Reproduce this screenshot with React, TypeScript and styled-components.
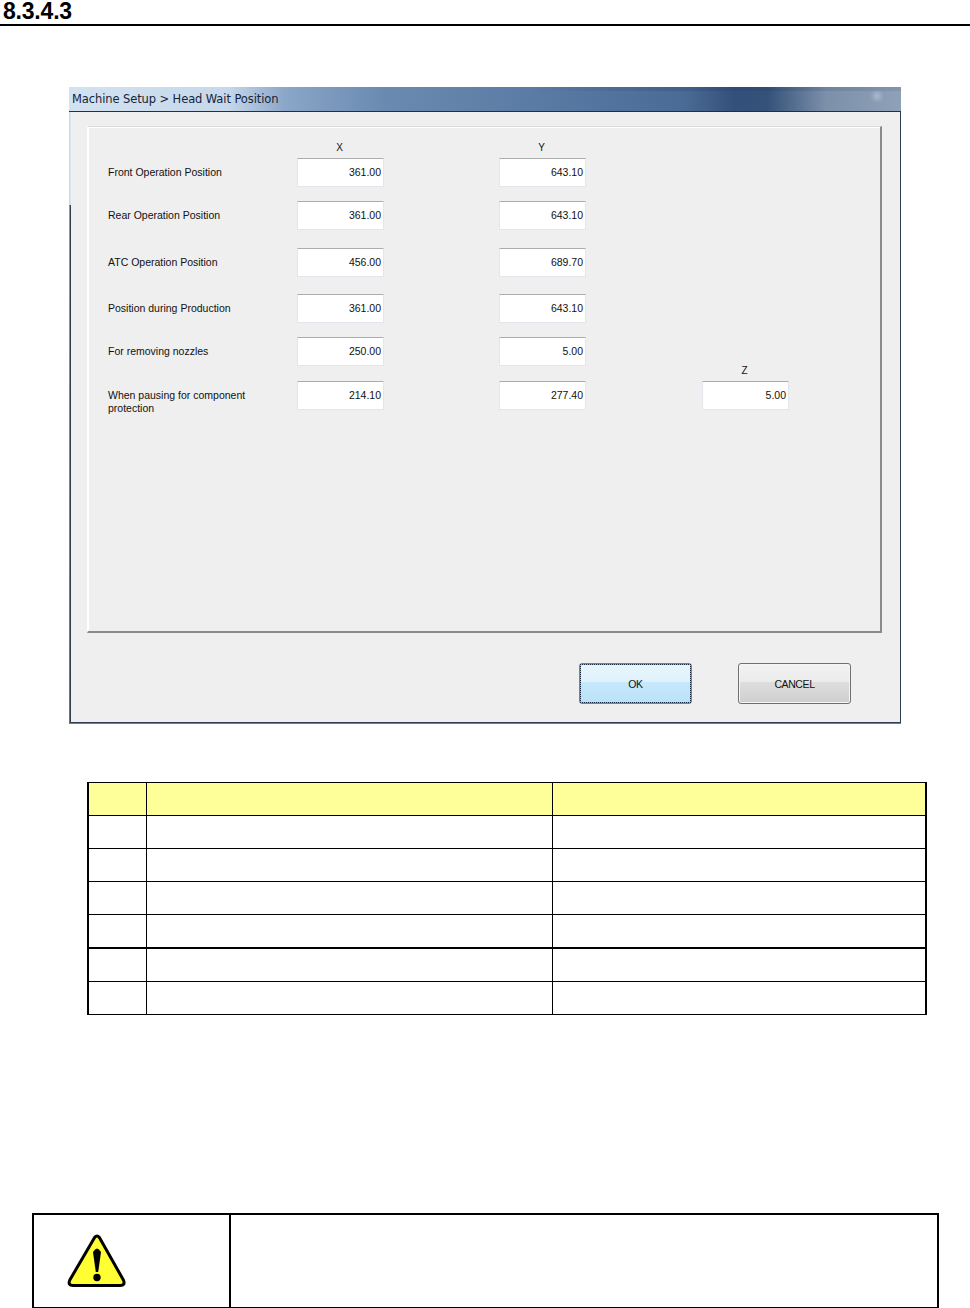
import { Fragment } from 'react';
import styled, { createGlobalStyle } from 'styled-components';

const GlobalStyle = createGlobalStyle`
  html, body {
    margin: 0;
    padding: 0;
    background: #fff;
    overflow: hidden;
  }
  * {
    box-sizing: border-box;
  }
`;

const Page = styled.div`
  width: 970px;
  height: 1308px;
  display: flex;
  flex-direction: column;
  font-family: 'Liberation Sans', Arial, sans-serif;
`;

const Heading = styled.h1`
  margin: 0;
  height: 26px;
  padding-left: 3px;
  border-bottom: 2px solid #000;
  font-size: 23px;
  line-height: 22px;
  letter-spacing: -0.2px;
  font-weight: 700;
  color: #000;
`;

const Dialog = styled.div`
  width: 832px;
  height: 636px;
  margin: 61px 0 0 69px;
  padding-left: 1px;
  display: flex;
  flex-direction: column;
  background:
    linear-gradient(180deg, #c9d9ea 0 118px, #8c9bb0 118px, #62768f 100%) left top / 1px 100% no-repeat,
    #efefef;
  box-shadow: 0 1px 0 #6a7f99;
`;

const TitleBar = styled.div`
  height: 25px;
  margin-left: -1px;
  padding: 2px 0 0 3px;
  background:
    radial-gradient(circle at 808px 9px, rgba(255, 255, 255, 0.3), transparent 7px),
    linear-gradient(90deg, rgba(30, 50, 90, 0), rgba(30, 50, 90, 0.2) 40%, rgba(30, 50, 90, 0.1) 100%) right top / 45% 4px no-repeat,
    linear-gradient(
      90deg,
      #d3e2f1 0%,
      #c6d8eb 19%,
      #8aa6c8 26%,
      #6a8ab0 38%,
      #5576a0 62%,
      #4a6b95 74%,
      #33507a 80%,
      #35527a 84%,
      #7c90aa 91%,
      #8ea1b7 100%
    );
  border-bottom: 1px solid #24303f;
  color: #14243a;
  font-family: 'DejaVu Sans', sans-serif;
  font-size: 11.5px;
  letter-spacing: -0.1px;
  line-height: 20px;
  white-space: nowrap;
`;

const Body = styled.div`
  flex: 1;
  padding: 14px 18px 0 17px;
  display: flex;
  flex-direction: column;
  background:
    linear-gradient(#d9e6f2, #d9e6f2) left top / 1px 93px no-repeat,
    linear-gradient(#2f3f52, #2f3f52) left 93px / 1px 100% no-repeat;
  border-right: 1px solid #2f3f52;
  border-bottom: 1px solid #2f3f52;
`;

const Panel = styled.div`
  height: 507px;
  padding: 14px 0 0 20px;
  background: #efefef;
  border-top: 1px solid #dcdcdc;
  border-left: 1px solid #fff;
  border-right: 2px solid #8a8a8a;
  border-bottom: 2px solid #8a8a8a;
  box-shadow: inset 1px 1px 0 #fff;
`;

const FormGrid = styled.div`
  display: grid;
  grid-template-columns: 189px 202px 203px 87px;
  grid-template-rows: 17px 43px 47px 46px 43px 44px auto;
  color: #111;
  font-size: 10.5px;
  line-height: 13px;
`;

const AxisLabel = styled.div<{ $inputRow?: boolean }>`
  width: 85px;
  text-align: center;
  line-height: 14px;
  font-size: 10px;
  align-self: ${(props) => (props.$inputRow ? 'end' : 'start')};
  padding-bottom: ${(props) => (props.$inputRow ? '3px' : '0')};
`;

const FieldLabel = styled.div`
  padding-top: 8px;
  width: 150px;
`;

const ValueBox = styled.div`
  width: 87px;
  height: 29px;
  padding-right: 2px;
  display: flex;
  align-items: center;
  justify-content: flex-end;
  background: #fff;
  border: 1px solid #e2e6ec;
  border-top-color: #acacac;
  border-radius: 1px;
  font-size: 10.5px;
`;

const ButtonRow = styled.div`
  display: flex;
  gap: 46px;
  padding: 30px 0 0 492px;
`;

const DialogButton = styled.div<{ $primary?: boolean }>`
  position: relative;
  width: 113px;
  height: 41px;
  display: flex;
  align-items: center;
  justify-content: center;
  font-size: 10.5px;
  letter-spacing: -0.4px;
  color: #111;
  border-radius: 3px;
  border: 1px solid ${(props) => (props.$primary ? '#1aa3dc' : '#707070')};
  background: ${(props) =>
    props.$primary
      ? 'linear-gradient(180deg, #e9f6fd 0%, #dff2fc 46%, #c6e8fb 47%, #bbe2f9 100%)'
      : 'linear-gradient(180deg, #f2f2f2 0%, #ebebeb 46%, #dddddd 47%, #cfcfcf 100%)'};
  box-shadow: inset 0 0 0 1px ${(props) => (props.$primary ? '#5cc3ee' : '#f5f5f5')};

  &::after {
    content: '';
    display: ${(props) => (props.$primary ? 'block' : 'none')};
    position: absolute;
    inset: 0;
    border: 1px dotted #1b2a44;
  }
`;

const LegendTable = styled.table`
  width: 840px;
  margin: 59px 0 0 87px;
  border-collapse: collapse;
  table-layout: fixed;
  border-left: 2px solid #000;
  border-right: 2px solid #000;
`;

const Cell = styled.td<{ $head?: boolean; $thick?: boolean }>`
  height: ${(props) => (props.$thick ? '34px' : '33px')};
  padding: 0;
  border: 1px solid #000;
  border-top-width: ${(props) => (props.$thick ? '2px' : '1px')};
  background: ${(props) => (props.$head ? '#ffff99' : '#fff')};
`;

const WarningBox = styled.div`
  width: 907px;
  height: 95px;
  margin: 198px 0 0 32px;
  display: grid;
  grid-template-columns: 197px 1fr;
  border: 2px solid #000;
  border-bottom-width: 1px;
`;

const IconCell = styled.div`
  border-right: 2px solid #000;
  padding: 18px 0 0 32px;
`;

const WarningIcon = () => (
  <svg width='62' height='56' viewBox='0 0 62 56' style={{ display: 'block' }}>
    <path
      d='M28.6 4.5 Q31 1.5 33.4 4.5 L57.4 47 Q59.7 52.5 54.2 52.5 L7 52.5 Q1.5 52.5 3.8 47 Z'
      fill='#ffff33'
      stroke='#000'
      strokeWidth='3'
      strokeLinejoin='round'
    />
    <path d='M27 19 Q31 12 35 19 L32.2 39 L29.8 39 Z' fill='#000' />
    <circle cx='31' cy='44.5' r='3.7' fill='#000' />
  </svg>
);

const rows = [
  { label: 'Front Operation Position', x: '361.00', y: '643.10' },
  { label: 'Rear Operation Position', x: '361.00', y: '643.10' },
  { label: 'ATC Operation Position', x: '456.00', y: '689.70' },
  { label: 'Position during Production', x: '361.00', y: '643.10' },
  { label: 'For removing nozzles', x: '250.00', y: '5.00' },
];

const App = () => {
  return (
    <Page>
      <GlobalStyle />
      <Heading>8.3.4.3</Heading>
      <Dialog>
        <TitleBar>Machine Setup &gt; Head Wait Position</TitleBar>
        <Body>
          <Panel>
            <FormGrid>
              <div />
              <AxisLabel>X</AxisLabel>
              <AxisLabel>Y</AxisLabel>
              <div />
              {rows.map((row, index) => (
                <Fragment key={row.label}>
                  <FieldLabel>{row.label}</FieldLabel>
                  <ValueBox>{row.x}</ValueBox>
                  <ValueBox>{row.y}</ValueBox>
                  {index === 4 ? <AxisLabel $inputRow>Z</AxisLabel> : <div />}
                </Fragment>
              ))}
              <FieldLabel>When pausing for component protection</FieldLabel>
              <ValueBox>214.10</ValueBox>
              <ValueBox>277.40</ValueBox>
              <ValueBox>5.00</ValueBox>
            </FormGrid>
          </Panel>
          <ButtonRow>
            <DialogButton $primary>OK</DialogButton>
            <DialogButton>CANCEL</DialogButton>
          </ButtonRow>
        </Body>
      </Dialog>
      <LegendTable>
        <colgroup>
          <col style={{ width: 58 }} />
          <col style={{ width: 406 }} />
          <col />
        </colgroup>
        <tbody>
          {[0, 1, 2, 3, 4, 5, 6].map((row) => (
            <tr key={row}>
              <Cell $head={row === 0} $thick={row === 5} />
              <Cell $head={row === 0} $thick={row === 5} />
              <Cell $head={row === 0} $thick={row === 5} />
            </tr>
          ))}
        </tbody>
      </LegendTable>
      <WarningBox>
        <IconCell>
          <WarningIcon />
        </IconCell>
        <div />
      </WarningBox>
    </Page>
  );
};

export default App;
